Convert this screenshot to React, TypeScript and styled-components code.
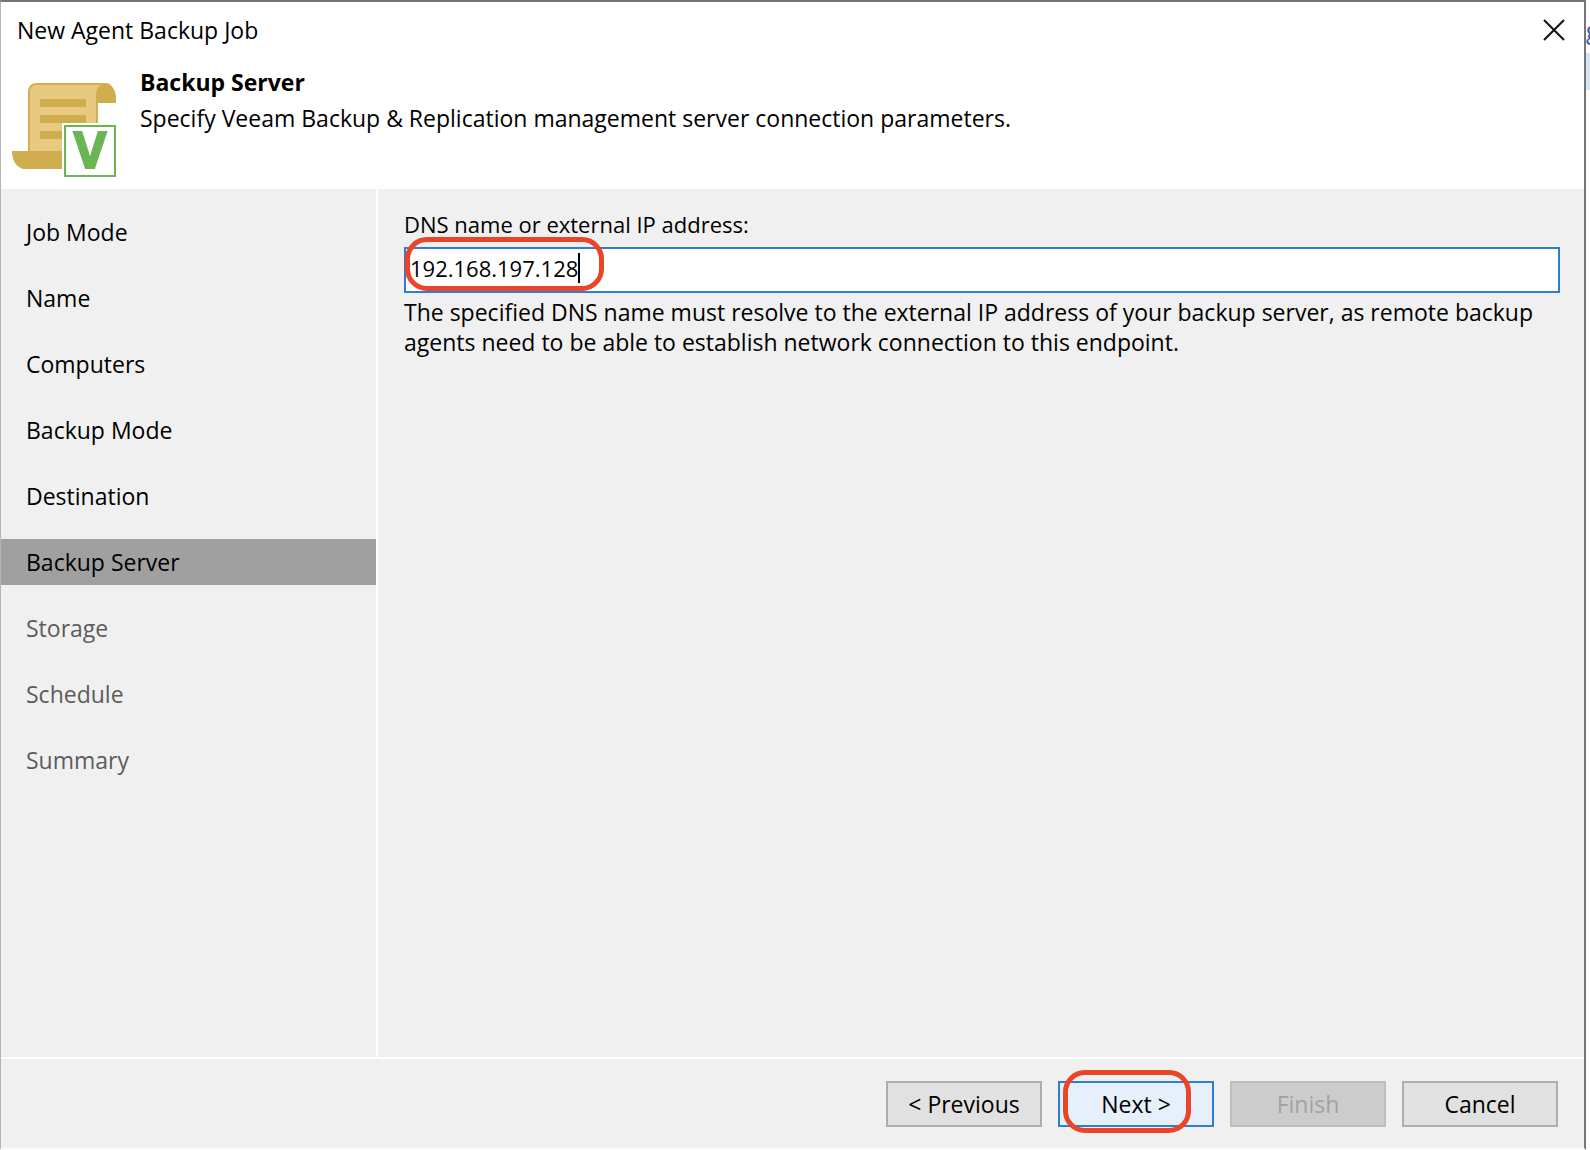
import React, { useState } from "react";
import styled, { createGlobalStyle, css } from "styled-components";

const GlobalStyle = createGlobalStyle`
  *, *::before, *::after { box-sizing: border-box; }
  body {
    margin: 0;
    background: #ffffff;
    color: #000000;
    font-family: "Open Sans", "Noto Sans", sans-serif;
    font-size: 23px;
    line-height: 30px;
  }
  button, input { font: inherit; color: inherit; }
`;

const Desktop = styled.div`
  display: grid;
  grid-template-columns: minmax(0, 1fr) 4px;
  min-height: 100vh;
`;

const Dialog = styled.main`
  display: flex;
  flex-direction: column;
  background: #ffffff;
  border: 1px solid #b4b4b4;
  border-top: 2px solid #757575;
  border-right: 2px solid #757575;
  border-bottom: 2px solid #fbfbfb;
`;

const TitleBar = styled.header`
  display: flex;
  justify-content: space-between;
  align-items: center;
  height: 56px;
  padding: 0 18px 0 16px;
`;

const WindowTitle = styled.h1`
  margin: 0;
  font-size: 23px;
  font-weight: 400;
`;

const CloseButton = styled.button`
  display: flex;
  padding: 0;
  border: 0;
  background: none;
`;

const Banner = styled.section`
  display: flex;
  gap: 22px;
  min-height: 131px;
  padding: 9px 11px;
`;

const BannerText = styled.div`
  display: flex;
  flex-direction: column;
  gap: 6px;
`;

const StepTitle = styled.h2`
  margin: 0;
  font-size: 23px;
  font-weight: 700;
`;

const Paragraph = styled.p`
  margin: 0;
`;

const Body = styled.div`
  flex: 1;
  display: grid;
  grid-template-columns: 377px minmax(0, 1fr);
  background: #f0f0f0;
`;

const Steps = styled.nav`
  display: flex;
  flex-direction: column;
  gap: 20px;
  padding: 20px 0;
  border-right: 2px solid #ffffff;
`;

const Step = styled.a<{ $state: "done" | "current" | "pending" }>`
  padding: 8px 25px;
  text-decoration: none;
  color: ${(p) => (p.$state === "pending" ? "#5c5c5c" : "#000000")};
  background: ${(p) => (p.$state === "current" ? "#a0a0a0" : "transparent")};
`;

const Content = styled.section`
  display: flex;
  flex-direction: column;
  padding: 20px 24px 20px 26px;
`;

const Label = styled.label`
  margin-bottom: 8px;
  font-size: 22px;
`;

const Field = styled.div`
  position: relative;
  display: flex;
  margin-bottom: 4px;
`;

const TextInput = styled.input`
  flex: 1;
  min-width: 0;
  height: 46px;
  padding: 0 4px 4px;
  border: 2px solid #2f7cd6;
  border-radius: 0;
  background: #ffffff;
  font-size: 22px;
  outline: none;
  caret-color: transparent;
`;

const Caret = styled.span`
  position: absolute;
  top: 6px;
  left: 174px;
  width: 2px;
  height: 30px;
  background: #000000;
`;

const Ring = styled.span`
  position: absolute;
  border: 5px solid #eb4427;
  border-radius: 22px;
  pointer-events: none;
`;

const FieldRing = styled(Ring)`
  top: -10px;
  left: 1px;
  width: 199px;
  height: 54px;
`;

const ButtonRing = styled(Ring)`
  top: -11px;
  left: 5px;
  width: 128px;
  height: 63px;
`;

const Footer = styled.footer`
  display: flex;
  justify-content: flex-end;
  gap: 16px;
  padding: 22px 26px 21px;
  border-top: 2px solid #ffffff;
  background: #f0f0f0;
`;

const ButtonSlot = styled.div`
  position: relative;
  display: flex;
`;

const Button = styled.button<{ $primary?: boolean }>`
  width: 156px;
  height: 46px;
  padding: 0;
  border: 2px solid #adadad;
  border-radius: 0;
  background: #e1e1e1;
  ${(p) =>
    p.$primary &&
    css`
      border-color: #2f7cd6;
      background: #e5f0fa;
    `}
  &:disabled {
    border-color: #bfbfbf;
    background: #cccccc;
    color: #a2a2a2;
  }
`;

const Behind = styled.aside`
  display: flex;
  flex-direction: column;
  gap: 8px;
  overflow: hidden;
  padding-top: 15px;
`;

const BehindText = styled.span`
  color: #2f55b8;
`;

const BehindSelection = styled.div`
  height: 37px;
  background: #d5e5f8;
`;

const JobMark = styled.svg`
  flex: none;
  overflow: visible;
  font-size: 50px;
  font-weight: 700;
`;

function JobIcon() {
  return (
    <JobMark width="106" height="112" viewBox="12 67 106 112" aria-hidden="true">
      <path d="M97 103V92q1-8 8-9c7 0 11 8 11 15v5z" fill="#d0ad4f" />
      <path
        d="M29 152V92q0-8 8-8h68q-7 2-8 9v59z"
        fill="#e9c87f"
        stroke="#d3af52"
        strokeWidth="2"
      />
      <path d="M40 99h46v8H40zM40 115h46v8H40zM40 131h46v8H40z" fill="#d0ad4f" />
      <path d="M12 151h52v18H23q-11-4-11-18z" fill="#d0ad4f" />
      <rect x="62" y="123" width="56" height="56" fill="#ffffff" />
      <rect x="65" y="126" width="50" height="50" fill="#ffffff" stroke="#6ab654" strokeWidth="2" />
      <text x="90" y="168" textAnchor="middle" fill="#6ab654" stroke="#6ab654" strokeWidth="2">V</text>
    </JobMark>
  );
}

const steps = [
  "Job Mode", "Name", "Computers", "Backup Mode", "Destination",
  "Backup Server", "Storage", "Schedule", "Summary",
];
const current = 5;

export default function App() {
  const [address, setAddress] = useState("192.168.197.128");
  return (
    <>
      <GlobalStyle />
      <Desktop>
        <Dialog>
          <TitleBar>
            <WindowTitle>New Agent Backup Job</WindowTitle>
            <CloseButton type="button" aria-label="Close">
              <svg width="24" height="24" viewBox="0 0 24 24" aria-hidden="true">
                <path d="M2 2L22 22M22 2L2 22" stroke="#111" strokeWidth="2" fill="none" />
              </svg>
            </CloseButton>
          </TitleBar>
          <Banner>
            <JobIcon />
            <BannerText>
              <StepTitle>Backup Server</StepTitle>
              <Paragraph>Specify Veeam Backup &amp; Replication management server connection parameters.</Paragraph>
            </BannerText>
          </Banner>
          <Body>
            <Steps aria-label="Wizard steps">
              {steps.map((name, i) => (
                <Step
                  key={name}
                  href={"#step-" + (i + 1)}
                  aria-current={i === current ? "step" : undefined}
                  $state={i < current ? "done" : i === current ? "current" : "pending"}
                >
                  {name}
                </Step>
              ))}
            </Steps>
            <Content>
              <Label htmlFor="address">DNS name or external IP address:</Label>
              <Field>
                <TextInput id="address" value={address} onChange={(e) => setAddress(e.target.value)} />
                <Caret />
                <FieldRing />
              </Field>
              <Paragraph>
                The specified DNS name must resolve to the external IP address of your backup server, as remote backup
                agents need to be able to establish network connection to this endpoint.
              </Paragraph>
            </Content>
          </Body>
          <Footer>
            <Button type="button">&lt; Previous</Button>
            <ButtonSlot>
              <Button type="button" $primary>Next &gt;</Button>
              <ButtonRing />
            </ButtonSlot>
            <Button type="button" disabled>Finish</Button>
            <Button type="button">Cancel</Button>
          </Footer>
        </Dialog>
        <Behind aria-hidden="true">
          <BehindText>g</BehindText>
          <BehindSelection />
        </Behind>
      </Desktop>
    </>
  );
}
